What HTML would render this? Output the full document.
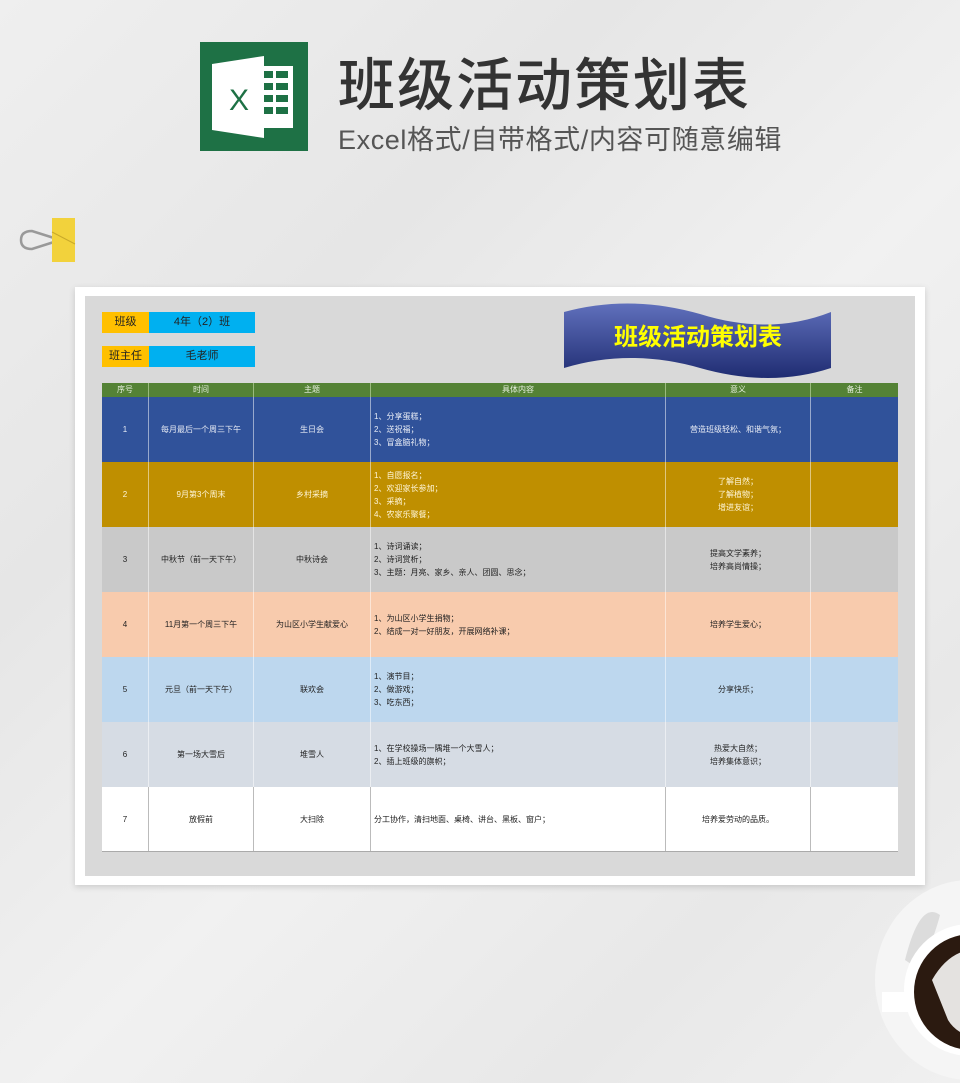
<!DOCTYPE html>
<html><head><meta charset="utf-8">
<style>
*{margin:0;padding:0;box-sizing:border-box}
body{width:960px;height:1083px;position:relative;overflow:hidden;font-family:"Liberation Sans","Noto Sans CJK SC",sans-serif;background:linear-gradient(135deg,#efefef 0%,#e6e6e6 30%,#f1f1f1 55%,#e8e8e8 80%,#f0f0f0 100%)}
.abs{position:absolute}
.title{left:338px;top:40px;font-size:57px;color:#333;font-weight:500;letter-spacing:2px;white-space:nowrap}
.sub{left:338px;top:118px;font-size:27px;color:#555;white-space:nowrap;letter-spacing:0.6px}
.card{left:75px;top:287px;width:850px;height:598px;background:#fff;box-shadow:0 2px 6px rgba(0,0,0,.15)}
.inner{left:85px;top:296px;width:830px;height:580px;background:#d9d9d9}
.lab{height:21px;font-size:11px;line-height:21px;text-align:center;color:#222}
.t{left:102px;top:383px;width:796px;font-size:8px}
.hdr{position:absolute;top:0;height:14px;background:#548235;color:#e8f0e0;line-height:14px;text-align:center;border-right:1px solid #9bbb7e}
.row{position:absolute;left:0;width:796px;height:65px}
.c{position:absolute;top:0;height:100%;display:flex;align-items:center;justify-content:center;text-align:center;border-right:1px solid rgba(255,255,255,.5);line-height:13px}
.l{justify-content:flex-start;text-align:left;padding-left:3px}
</style></head><body>
<div class="abs" style="left:200px;top:42px;width:108px;height:109px;background:#1e7145"></div>
<svg class="abs" style="left:200px;top:42px" width="108" height="109">
<rect x="58" y="24" width="35" height="62" fill="#fff"/>
<g fill="#1e7145"><rect x="63" y="29" width="10" height="7"/><rect x="76" y="29" width="12" height="7"/><rect x="63" y="41" width="10" height="7"/><rect x="76" y="41" width="12" height="7"/><rect x="63" y="53" width="10" height="7"/><rect x="76" y="53" width="12" height="7"/><rect x="63" y="65" width="10" height="7"/><rect x="76" y="65" width="12" height="7"/></g>
<polygon points="12,22 64,14 64,96 12,88" fill="#fff"/>
<text x="29" y="68" font-size="30" fill="#1e7145" font-family="Liberation Sans" transform="scale(1,1)">X</text>
</svg>
<div class="abs title">班级活动策划表</div>
<div class="abs sub">Excel格式/自带格式/内容可随意编辑</div>
<svg class="abs" style="left:18px;top:218px" width="60" height="48">
<path d="M36 20 L14 13 Q3 13 3 22 Q3 31 14 31 L36 24" fill="none" stroke="#999" stroke-width="2.5"/>
<rect x="34" y="0" width="23" height="44" fill="#f2d23c"/>
<line x1="34" y1="14" x2="57" y2="26" stroke="#c9a92a"/>
</svg>
<svg class="abs" style="left:860px;top:880px" width="100" height="203">
<ellipse cx="110" cy="100" rx="95" ry="100" fill="#f5f5f5"/>
<path d="M45 80 Q60 20 80 35 Q75 55 60 90 Z" fill="#dcdcdc"/>
<rect x="22" y="112" width="30" height="20" fill="#fff"/>
<circle cx="110" cy="110" r="66" fill="#fff"/>
<circle cx="112" cy="112" r="58" fill="#2b1a10"/>
<path d="M72 100 Q95 60 135 72 L135 160 Q100 160 88 140 Z" fill="#e4e2e0"/>
</svg>
<div class="abs card"></div>
<div class="abs inner"></div>
<div class="abs lab" style="left:102px;top:312px;width:47px;background:#ffc000">班级</div>
<div class="abs lab" style="left:149px;top:312px;width:106px;background:#00b0f0">4年（2）班</div>
<div class="abs lab" style="left:102px;top:346px;width:47px;background:#ffc000">班主任</div>
<div class="abs lab" style="left:149px;top:346px;width:106px;background:#00b0f0">毛老师</div>
<svg class="abs" style="left:560px;top:298px" width="275" height="82">
<defs><linearGradient id="g" x1="0" y1="0" x2="0" y2="1"><stop offset="0" stop-color="#6070bc"/><stop offset="1" stop-color="#1f2c72"/></linearGradient></defs>
<path d="M4 14 Q70 -4 140 16 Q210 38 271 14 L271 70 Q210 90 140 70 Q70 50 4 70 Z" fill="url(#g)"/>
<text x="138" y="47" text-anchor="middle" font-size="24" fill="#ffff00" font-weight="bold" font-family="Liberation Sans,Noto Sans CJK SC,sans-serif">班级活动策划表</text>
</svg>
<div class="abs t">
<div class="hdr" style="left:0;width:47px">序号</div>
<div class="hdr" style="left:47px;width:105px">时间</div>
<div class="hdr" style="left:152px;width:117px">主题</div>
<div class="hdr" style="left:269px;width:295px">具体内容</div>
<div class="hdr" style="left:564px;width:145px">意义</div>
<div class="hdr" style="left:709px;width:87px;border:0">备注</div>

<div class="row" style="top:14px;background:#30529a;color:#e8ecf5">
<div class="c" style="left:0;width:47px">1</div><div class="c" style="left:47px;width:105px">每月最后一个周三下午</div><div class="c" style="left:152px;width:117px">生日会</div><div class="c l" style="left:269px;width:295px">1、分享蛋糕；<br>2、送祝福；<br>3、冒盒脑礼物；</div><div class="c" style="left:564px;width:145px">营造班级轻松、和谐气氛；</div><div class="c" style="left:709px;width:87px;border:0"></div></div>

<div class="row" style="top:79px;background:#bf8f00;color:#fff6d8">
<div class="c" style="left:0;width:47px">2</div><div class="c" style="left:47px;width:105px">9月第3个周末</div><div class="c" style="left:152px;width:117px">乡村采摘</div><div class="c l" style="left:269px;width:295px">1、自愿报名；<br>2、欢迎家长参加；<br>3、采摘；<br>4、农家乐聚餐；</div><div class="c" style="left:564px;width:145px">了解自然；<br>了解植物；<br>增进友谊；</div><div class="c" style="left:709px;width:87px;border:0"></div></div>

<div class="row" style="top:144px;background:#c9c9c9;color:#222">
<div class="c" style="left:0;width:47px">3</div><div class="c" style="left:47px;width:105px">中秋节（前一天下午）</div><div class="c" style="left:152px;width:117px">中秋诗会</div><div class="c l" style="left:269px;width:295px">1、诗词诵读；<br>2、诗词赏析；<br>3、主题：月亮、家乡、亲人、团圆、思念；</div><div class="c" style="left:564px;width:145px">提高文学素养；<br>培养高尚情操；</div><div class="c" style="left:709px;width:87px;border:0"></div></div>

<div class="row" style="top:209px;background:#f8cbad;color:#222">
<div class="c" style="left:0;width:47px">4</div><div class="c" style="left:47px;width:105px">11月第一个周三下午</div><div class="c" style="left:152px;width:117px">为山区小学生献爱心</div><div class="c l" style="left:269px;width:295px">1、为山区小学生捐物；<br>2、结成一对一好朋友，开展网络补课；</div><div class="c" style="left:564px;width:145px">培养学生爱心；</div><div class="c" style="left:709px;width:87px;border:0"></div></div>

<div class="row" style="top:274px;background:#bdd7ee;color:#222">
<div class="c" style="left:0;width:47px">5</div><div class="c" style="left:47px;width:105px">元旦（前一天下午）</div><div class="c" style="left:152px;width:117px">联欢会</div><div class="c l" style="left:269px;width:295px">1、演节目；<br>2、做游戏；<br>3、吃东西；</div><div class="c" style="left:564px;width:145px">分享快乐；</div><div class="c" style="left:709px;width:87px;border:0"></div></div>

<div class="row" style="top:339px;background:#d6dce4;color:#222">
<div class="c" style="left:0;width:47px">6</div><div class="c" style="left:47px;width:105px">第一场大雪后</div><div class="c" style="left:152px;width:117px">堆雪人</div><div class="c l" style="left:269px;width:295px">1、在学校操场一隅堆一个大雪人；<br>2、插上班级的旗帜；</div><div class="c" style="left:564px;width:145px">热爱大自然；<br>培养集体意识；</div><div class="c" style="left:709px;width:87px;border:0"></div></div>

<div class="row" style="top:404px;background:#fff;color:#222;border-bottom:1px solid #aaa">
<div class="c" style="left:0;width:47px;border-right-color:#bbb">7</div><div class="c" style="left:47px;width:105px;border-right-color:#bbb">放假前</div><div class="c" style="left:152px;width:117px;border-right-color:#bbb">大扫除</div><div class="c l" style="left:269px;width:295px;border-right-color:#bbb">分工协作，清扫地面、桌椅、讲台、黑板、窗户；</div><div class="c" style="left:564px;width:145px;border-right-color:#bbb">培养爱劳动的品质。</div><div class="c" style="left:709px;width:87px;border:0"></div></div>
</div>
</body></html>
